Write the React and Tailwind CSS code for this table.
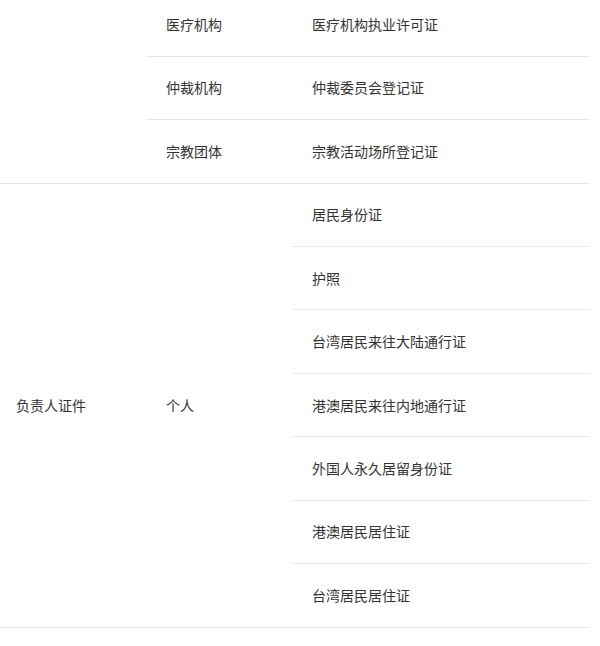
import React from "react";

const font = { fontFamily: '"Noto Sans CJK SC", "Microsoft YaHei", sans-serif' };

function Leaf({ text, last }) {
  return (
    <div
      className={
        "flex items-center pl-5 " +
        (last ? "h-[62.43px]" : "h-[63.43px] border-b border-[#e8e8e8]")
      }
    >
      {text}
    </div>
  );
}

export default function App() {
  const g1 = [
    ["医疗机构", "医疗机构执业许可证"],
    ["仲裁机构", "仲裁委员会登记证"],
    ["宗教团体", "宗教活动场所登记证"],
  ];
  const g2 = [
    "居民身份证",
    "护照",
    "台湾居民来往大陆通行证",
    "港澳居民来往内地通行证",
    "外国人永久居留身份证",
    "港澳居民居住证",
    "台湾居民居住证",
  ];
  return (
    <div className="w-[600px] h-[646px] overflow-hidden bg-white" style={font}>
      <div className="w-[590px] mt-[-6.7px] text-[14px] text-[#333]">
        <div className="flex border-b border-[#e8e8e8]">
          <div className="w-[146px] shrink-0" />
          <div className="flex-1 flex flex-col">
            {g1.map(([a, b], i) => (
              <div
                key={a}
                className={
                  "flex " +
                  (i === g1.length - 1
                    ? "h-[62.43px]"
                    : "h-[63.43px] border-b border-[#e8e8e8]")
                }
              >
                <div className="w-[146px] shrink-0 flex items-center pl-5">{a}</div>
                <div className="flex-1 flex items-center pl-5">{b}</div>
              </div>
            ))}
          </div>
        </div>
        <div className="flex border-b border-[#e8e8e8]">
          <div className="w-[146px] shrink-0 flex items-center pl-4">负责人证件</div>
          <div className="w-[146px] shrink-0 flex items-center pl-5">个人</div>
          <div className="flex-1 flex flex-col">
            {g2.map((t, i) => (
              <Leaf key={t} text={t} last={i === g2.length - 1} />
            ))}
          </div>
        </div>
      </div>
    </div>
  );
}
